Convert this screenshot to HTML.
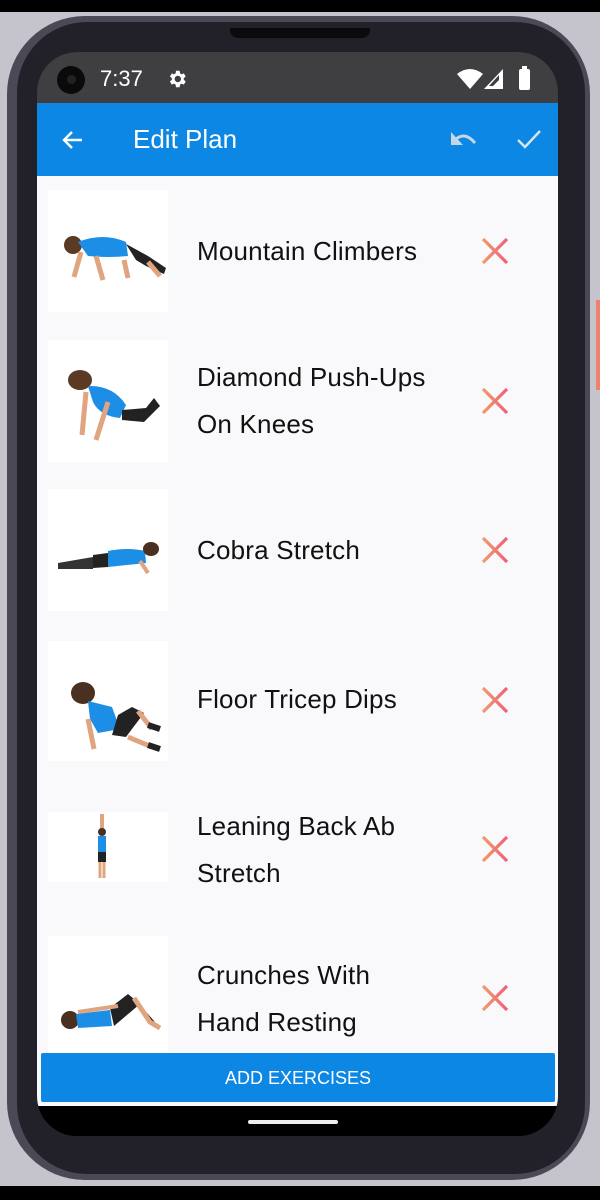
<!DOCTYPE html>
<html><head><meta charset="utf-8"><style>
*{margin:0;padding:0;box-sizing:border-box}
html,body{width:600px;height:1200px;overflow:hidden;background:#c5c4cc;font-family:"Liberation Sans",Roboto,sans-serif}
.topb{position:absolute;left:0;top:0;width:600px;height:12px;background:#000}
.botb2{position:absolute;left:0;top:1186px;width:600px;height:14px;background:#000}
.frame{position:absolute;left:7px;top:16px;width:583px;height:1164px;border-radius:78px;background:#4a4955}
.inner{position:absolute;left:17px;top:22px;width:568px;height:1152px;border-radius:70px;background:#222129}
.notch{position:absolute;left:230px;top:28px;width:140px;height:10px;background:#0b0b0e;border-radius:0 0 8px 8px}
.screen{position:absolute;left:37px;top:52px;width:521px;height:1084px;border-radius:40px;overflow:hidden;background:#000}
.status{position:absolute;left:0;top:0;width:521px;height:51px;background:#3f3f41;color:#fff}
.appbar{position:absolute;left:0;top:51px;width:521px;height:73px;background:#0d87e4;color:#fff}
.list{position:absolute;left:0;top:124px;width:521px;height:930px;background:#f9f8fa}
.thumb{position:absolute;left:11px;width:120px;background:#fff}
.name{position:absolute;left:160px;font-size:26px;color:#111;line-height:47px;letter-spacing:0.2px}
.x{position:absolute;left:444px;width:28px;height:28px}
.btn{position:absolute;left:4px;top:1001px;width:514px;height:49px;background:#0d87e4;color:#fff;font-size:18px;text-align:center;line-height:51px;border-radius:2px}
.nav{position:absolute;left:0;top:1054px;width:521px;height:30px;background:#000}
.side{position:absolute;left:596px;top:300px;width:4px;height:90px;background:#f08070}
</style></head><body>
<div class="topb"></div><div class="botb2"></div>
<div class="frame"></div><div class="inner"></div>
<div class="side"></div>
<div class="notch"></div>
<div class="screen">
 <div class="status">
  <div style="position:absolute;left:20px;top:14px;width:28px;height:28px;border-radius:50%;background:#0a0a0a"></div>
  <div style="position:absolute;left:30px;top:23px;width:9px;height:9px;border-radius:50%;background:#222"></div>
  <div style="position:absolute;left:63px;top:14px;font-size:22px">7:37</div>
  <svg style="position:absolute;left:129px;top:16px" width="22" height="22" viewBox="0 0 24 24"><path fill="#fff" d="M19.4 13a7.5 7.5 0 0 0 0-2l2.1-1.6-2-3.5-2.5 1a7 7 0 0 0-1.7-1L14.9 3h-4l-.4 2.9a7 7 0 0 0-1.700 1l-2.5-1-2 3.5L6.4 11a7.5 7.5 0 0 0 0 2l-2.1 1.6 2 3.5 2.5-1a7 7 0 0 0 1.7 1l.4 2.9h4l.4-2.9a7 7 0 0 0 1.7-1l2.5 1 2-3.5zM12.9 15.5a3.5 3.5 0 1 1 0-7 3.5 3.5 0 0 1 0 7z"/></svg>
  <svg style="position:absolute;left:420px;top:17px" width="26" height="20" viewBox="0 0 26 20"><path fill="#fff" d="M0 5Q13-5 26 5L13 20z"/></svg>
  <svg style="position:absolute;left:447px;top:17px" width="20" height="20" viewBox="0 0 20 20"><path fill="#fff" d="M19 0V20H0z"/><path fill="#3f3f41" d="M15 6V17H5z"/><path fill="#fff" d="M15 11V17H9z"/></svg>
  <div style="position:absolute;left:482px;top:17px;width:11px;height:21px;background:#fff;border-radius:2px"></div>
  <div style="position:absolute;left:485px;top:14px;width:5px;height:4px;background:#fff"></div>
 </div>
 <div class="appbar">
  <svg style="position:absolute;left:24px;top:25px" width="24" height="24" viewBox="0 0 24 24"><path fill="none" stroke="#fff" stroke-width="2.4" d="M21 12H4M11 4l-8 8 8 8"/></svg>
  <div style="position:absolute;left:96px;top:21px;font-size:26px">Edit Plan</div>
  <svg style="position:absolute;left:412px;top:26px" width="30" height="22" viewBox="0 0 30 22"><path fill="none" stroke="#c5d6e6" stroke-width="3" d="M5 12Q15 1 26 14"/><path fill="#c5d6e6" d="M2 3V16H14z"/></svg>
  <svg style="position:absolute;left:479px;top:25px" width="26" height="22" viewBox="0 0 26 22"><path fill="none" stroke="#d8e6f2" stroke-width="2.4" d="M2 12l7 7L24 3"/></svg>
 </div>
 <div class="list">
  <div class="thumb" style="top:14px;height:122px"><svg width="120" height="122" viewBox="0 0 120 122"><ellipse cx="25" cy="55" rx="9" ry="9" fill="#5a3a22"/><path d="M30 52Q55 42 78 52L80 66Q60 68 40 66z" fill="#1d8ee6"/><path d="M78 54L100 66L118 78L116 84L98 76L88 70z" fill="#222"/><path d="M33 62L26 87M48 66L55 90M100 72L112 86" stroke="#e0a47f" stroke-width="5"/><path d="M76 70L80 88" stroke="#e0a47f" stroke-width="5"/></svg></div>
  <div class="name" style="top:52px">Mountain Climbers</div>
  <div class="thumb" style="top:164px;height:122px"><svg width="120" height="122" viewBox="0 0 120 122"><ellipse cx="32" cy="40" rx="12" ry="10" fill="#5a3a22"/><path d="M40 46Q65 45 78 65L72 78Q52 76 45 62z" fill="#1d8ee6"/><path d="M74 70L98 68L106 58L112 66L96 82L74 80z" fill="#222"/><path d="M38 52L34 95M60 62L48 100" stroke="#e0a47f" stroke-width="5"/></svg></div>
  <div class="name" style="top:178px">Diamond Push-Ups<br>On Knees</div>
  <div class="thumb" style="top:313px;height:122px"><svg width="120" height="122" viewBox="0 0 120 122"><path d="M10 74L45 68L45 80L10 80z" fill="#333"/><path d="M45 66L60 64L60 78L45 79z" fill="#222"/><path d="M60 62Q80 58 97 62L98 74L60 78z" fill="#1d8ee6"/><ellipse cx="103" cy="60" rx="8" ry="7" fill="#4a3020"/><path d="M92 72L100 84" stroke="#e0a47f" stroke-width="4"/></svg></div>
  <div class="name" style="top:351px">Cobra Stretch</div>
  <div class="thumb" style="top:465px;height:120px"><svg width="120" height="120" viewBox="0 0 120 120"><ellipse cx="35" cy="52" rx="12" ry="11" fill="#4a3020"/><path d="M40 60L64 66L72 88L50 92L42 78z" fill="#1d8ee6"/><path d="M70 74L84 66L96 72L78 96L64 94z" fill="#222"/><path d="M40 78L46 108M90 70L104 88M80 96L104 106" stroke="#e0a47f" stroke-width="5"/><path d="M100 84L112 88M100 104L112 108" stroke="#222" stroke-width="6"/></svg></div>
  <div class="name" style="top:500px">Floor Tricep Dips</div>
  <div class="thumb" style="top:636px;height:70px"><svg width="120" height="70" viewBox="0 0 120 70"><path d="M54 2L54 18" stroke="#e0a47f" stroke-width="4"/><circle cx="54" cy="20" r="4" fill="#4a3020"/><rect x="50" y="24" width="8" height="16" fill="#1d8ee6"/><rect x="50" y="40" width="8" height="10" fill="#222"/><path d="M52 50V66M56 50V66" stroke="#e0a47f" stroke-width="3"/></svg></div>
  <div class="name" style="top:627px">Leaning Back Ab<br>Stretch</div>
  <div class="thumb" style="top:760px;height:116px"><svg width="120" height="116" viewBox="0 0 120 116"><ellipse cx="22" cy="84" rx="9" ry="9" fill="#4a3020"/><path d="M28 78L62 74L64 90L30 92z" fill="#1d8ee6"/><path d="M62 72L80 58L92 68L66 90z" fill="#222"/><path d="M86 62L102 86L112 92" stroke="#e0a47f" stroke-width="5"/><path d="M30 76L70 70" stroke="#e0a47f" stroke-width="4"/></svg></div>
  <div class="name" style="top:776px">Crunches With<br>Hand Resting</div>
  <svg width="0" height="0" style="position:absolute"><defs><linearGradient id="g" x1="0" x2="1"><stop offset="0" stop-color="#f19a68"/><stop offset="1" stop-color="#ef5f7a"/></linearGradient></defs></svg>
  <svg class="x" style="top:61px" viewBox="0 0 28 28"><path d="M2 2L26 26M26 2L2 26" stroke="url(#g)" stroke-width="3.2"/></svg>
  <svg class="x" style="top:211px" viewBox="0 0 28 28"><path d="M2 2L26 26M26 2L2 26" stroke="url(#g)" stroke-width="3.2"/></svg>
  <svg class="x" style="top:360px" viewBox="0 0 28 28"><path d="M2 2L26 26M26 2L2 26" stroke="url(#g)" stroke-width="3.2"/></svg>
  <svg class="x" style="top:510px" viewBox="0 0 28 28"><path d="M2 2L26 26M26 2L2 26" stroke="url(#g)" stroke-width="3.2"/></svg>
  <svg class="x" style="top:659px" viewBox="0 0 28 28"><path d="M2 2L26 26M26 2L2 26" stroke="url(#g)" stroke-width="3.2"/></svg>
  <svg class="x" style="top:808px" viewBox="0 0 28 28"><path d="M2 2L26 26M26 2L2 26" stroke="url(#g)" stroke-width="3.2"/></svg>
 </div>
 <div class="btn">ADD EXERCISES</div>
 <div class="nav"><div style="position:absolute;left:211px;top:14px;width:90px;height:4px;border-radius:2px;background:#eee"></div></div>
</div>
</body></html>
